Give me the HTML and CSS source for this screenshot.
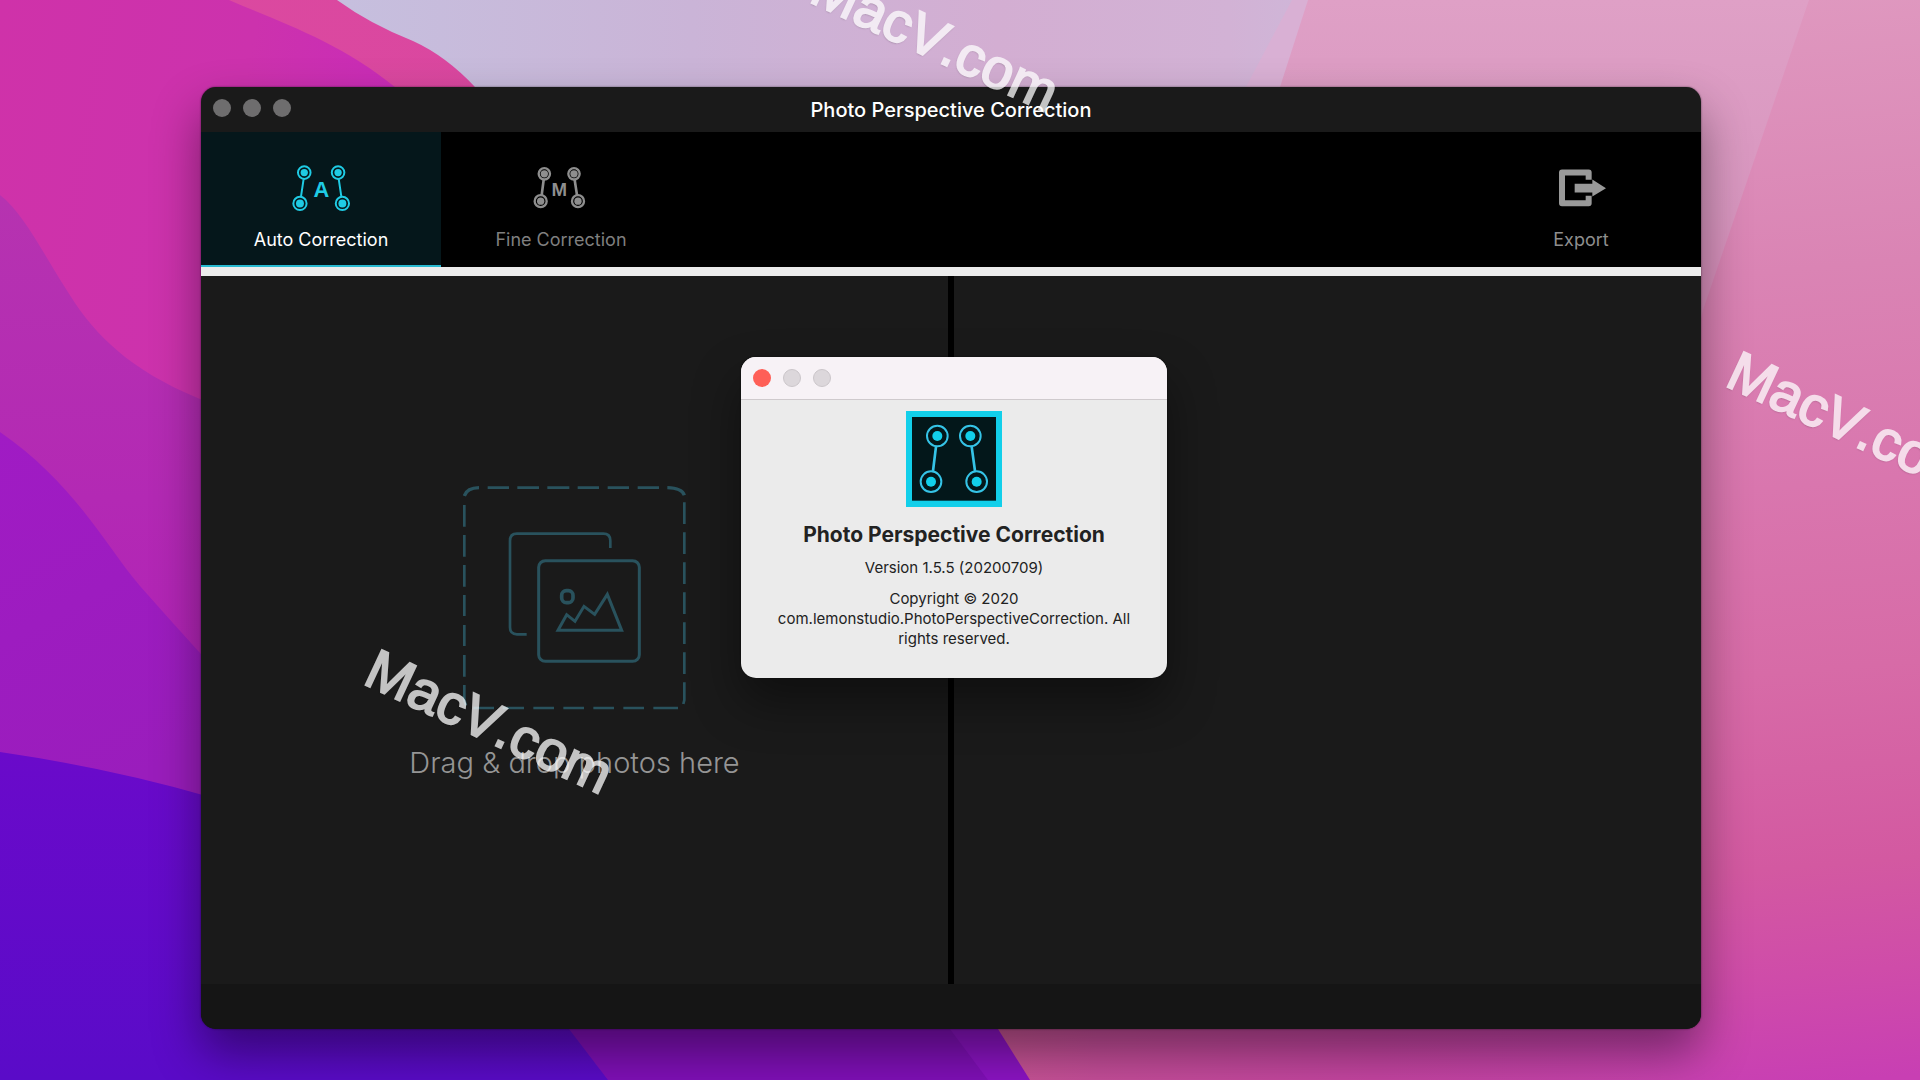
FILE: index.html
```html
<!DOCTYPE html>
<html lang="en">
<head>
<meta charset="utf-8">
<title>Photo Perspective Correction</title>
<link rel="stylesheet" href="styles.css">
</head>
<body>
<div class="desktop">
  <svg class="wallpaper" viewBox="0 0 1920 1080" preserveAspectRatio="none" aria-hidden="true">
    <defs>
      <linearGradient id="sky" x1="0" y1="0" x2="1" y2="0">
        <stop offset="0.18" stop-color="#c6bfde"/><stop offset="0.36" stop-color="#cab4d7"/><stop offset="0.52" stop-color="#d3aed2"/><stop offset="0.64" stop-color="#d2b2d5"/><stop offset="0.68" stop-color="#cfb6d8"/>
      </linearGradient>
      <linearGradient id="rose" x1="0" y1="0" x2="0" y2="1">
        <stop offset="0" stop-color="#dfa0c6"/><stop offset="0.35" stop-color="#d896bf"/><stop offset="1" stop-color="#d873ac"/>
      </linearGradient>
      <linearGradient id="edge" gradientUnits="userSpaceOnUse" x1="1760" y1="0" x2="1850" y2="1080">
        <stop offset="0" stop-color="#df98bf"/><stop offset="0.25" stop-color="#da84b4"/><stop offset="0.45" stop-color="#d976ae"/><stop offset="0.62" stop-color="#d76ba7"/><stop offset="0.8" stop-color="#d359a1"/><stop offset="0.9" stop-color="#cf4ca9"/><stop offset="1" stop-color="#c83fb3"/>
      </linearGradient>
      <linearGradient id="floor" x1="0" y1="0" x2="1" y2="0">
        <stop offset="0" stop-color="#cb5c90"/><stop offset="0.25" stop-color="#c64e9a"/><stop offset="0.6" stop-color="#c645a2"/><stop offset="1" stop-color="#c842b0"/>
      </linearGradient>
      <linearGradient id="coral" x1="0" y1="0" x2="1" y2="0">
        <stop offset="0" stop-color="#dc4aa0"/><stop offset="1" stop-color="#d8449f"/>
      </linearGradient>
      <linearGradient id="magenta" x1="0" y1="0" x2="1" y2="0.3">
        <stop offset="0" stop-color="#cf32a9"/><stop offset="0.6" stop-color="#cc32ad"/><stop offset="1" stop-color="#c92bb8"/>
      </linearGradient>
      <linearGradient id="orchid" x1="0" y1="0" x2="0" y2="1">
        <stop offset="0" stop-color="#b633b0"/><stop offset="1" stop-color="#b01fb8"/>
      </linearGradient>
      <linearGradient id="purple" x1="0" y1="0" x2="0.3" y2="1">
        <stop offset="0" stop-color="#a01bc4"/><stop offset="1" stop-color="#9a1dbc"/>
      </linearGradient>
      <linearGradient id="indigo" x1="0" y1="0" x2="0" y2="1">
        <stop offset="0" stop-color="#6a0aca"/><stop offset="1" stop-color="#5a0bc8"/>
      </linearGradient>
    </defs>
    <rect width="1920" height="1080" fill="url(#sky)"/>
    <path d="M1292 0H1400V87H1246Z" fill="#d9b0d4"/>
    <path d="M1308 0H1920V600H1140L1280 87Z" fill="url(#rose)"/>
    <path d="M1809 0H1920V1080H1690V366L1703 310Z" fill="url(#edge)"/>
    <rect x="900" y="1000" width="790" height="80" fill="url(#floor)"/>
    <path d="M0 0H337Q370 24 413 41Q446 56 475 87L600 300L900 900L998 1029L1030 1080H0Z" fill="url(#coral)"/>
    <path d="M0 0H229C280 22 340 42 395 87V700H0Z" fill="url(#magenta)"/>
    <path d="M0 195C25 214 45 258 75 303C102 343 140 376 210 403V800H0Z" fill="url(#orchid)"/>
    <path d="M0 432C75 484 105 545 140 586Q170 620 210 664V820H0Z" fill="url(#purple)"/>
    <path d="M500 900H930L998 1029L1030 1080H500Z" fill="#8c14c4"/>
    <path d="M500 900H880L950 1029L988 1080H500Z" fill="#8010b8"/>
    <path d="M0 752Q110 768 210 797L480 930Q540 980 569 1029L608 1080H0Z" fill="url(#indigo)"/>
  </svg>

  <main class="window">
    <header class="titlebar">
      <div class="lights"><span class="light"></span><span class="light"></span><span class="light"></span></div>
      <h1 class="title">Photo Perspective Correction</h1>
    </header>
    <nav class="toolbar">
      <button class="tool tool-active" type="button">
        <svg class="tool-icon" width="59" height="47" viewBox="305 272 178 140" aria-hidden="true">
          <g fill="none" stroke="currentColor" stroke-width="6"><circle cx="342" cy="294" r="19"/><circle cx="444" cy="294" r="19"/><circle cx="329" cy="387" r="20"/><circle cx="457" cy="387" r="20"/></g>
          <g stroke="currentColor" stroke-width="6"><path d="M340 314L332 367M446 314L454 367"/></g>
          <g fill="currentColor"><circle cx="342" cy="294" r="11"/><circle cx="444" cy="294" r="11"/><circle cx="329" cy="387" r="12"/><circle cx="457" cy="387" r="12"/><text class="letter" x="394" y="369" font-size="66">A</text></g>
        </svg>
        <span>Auto Correction</span>
      </button>
      <button class="tool" type="button">
        <svg class="tool-icon" width="56" height="47" viewBox="1030 272 168 140" aria-hidden="true">
          <g fill="none" stroke="currentColor" stroke-width="7"><circle cx="1064" cy="298" r="17"/><circle cx="1153" cy="298" r="17"/><circle cx="1053" cy="380" r="18"/><circle cx="1165" cy="380" r="18"/></g>
          <g stroke="currentColor" stroke-width="8"><path d="M1062 316L1056 362M1155 316L1162 362"/></g>
          <g fill="currentColor"><circle cx="1064" cy="298" r="11"/><circle cx="1153" cy="298" r="11"/><circle cx="1053" cy="380" r="11"/><circle cx="1165" cy="380" r="11"/><text class="letter" x="1109" y="363" font-size="56">M</text></g>
        </svg>
        <span>Fine Correction</span>
      </button>
      <button class="tool tool-export" type="button">
        <svg class="tool-icon" width="49" height="47" viewBox="172 105 147 140" aria-hidden="true">
          <path d="M267 149V127H187V219H267V197" fill="none" stroke="currentColor" stroke-width="18" stroke-linejoin="round"/>
          <path d="M225 161H278V148L319 174L278 199V187H225Z" fill="currentColor"/>
        </svg>
        <span>Export</span>
      </button>
    </nav>
    <section class="workspace">
      <div class="pane">
        <svg class="drop-art" width="223" height="224" viewBox="339 48 669 672" aria-hidden="true">
          <g fill="none" stroke="#29525d" stroke-width="8">
            <path d="M413 53H477M502 53H567M592 53H658M683 53H747M773 53H837M863 53H927"/>
            <path d="M343 105V170M343 195V260M343 285V350M343 375V438M343 465V528M343 555V620M343 645V690L348 706"/>
            <path d="M1003 97V162M1003 187V252M1003 277V342M1003 367V432M1003 457V522M1003 547V612M1003 637V690L1000 702"/>
            <path d="M370 714H432M458 714H522M550 714H612M640 714H702M730 714H792M820 714H882M910 714H984"/>
            <path d="M343 78Q350 54 387 53M952 53Q996 54 1003 76" stroke-width="10"/>
            <path d="M781 234V212Q781 191 760 191H501Q480 191 480 212V472Q480 493 501 493H530"/>
            <rect x="566" y="272" width="302" height="302" rx="20" stroke-width="9"/>
            <rect x="635" y="362" width="34" height="36" rx="14" stroke-width="11"/>
            <path d="M624 481L650 434L675 454L702 409L734 433L772 373L815 481Z" stroke-width="9"/>
          </g>
        </svg>
        <p class="drop-text">Drag &amp; drop photos here</p>
      </div>
      <div class="pane"></div>
    </section>
    <footer class="statusbar"></footer>
  </main>

  <section class="about" role="dialog" aria-labelledby="about-name">
    <header class="about-bar">
      <div class="lights">
        <button class="light light-close" type="button" aria-label="Close"></button><span class="light light-off"></span><span class="light light-off"></span>
      </div>
    </header>
    <div class="about-body">
      <svg width="96" height="96" viewBox="528 198 288 288" aria-hidden="true">
        <rect x="528" y="198" width="288" height="288" fill="#12cfea"/>
        <rect x="546" y="216" width="252" height="251" fill="#03171a"/>
        <g fill="none" stroke="#35c3e6" stroke-width="6"><circle cx="622" cy="273" r="31"/><circle cx="721" cy="273" r="31"/><circle cx="603" cy="410" r="31"/><circle cx="740" cy="410" r="31"/></g>
        <path d="M618 305L609 378M725 305L735 378" stroke="#35c3e6" stroke-width="8"/>
        <g fill="#12cfea"><circle cx="622" cy="273" r="15"/><circle cx="721" cy="273" r="15"/><circle cx="603" cy="410" r="15"/><circle cx="740" cy="410" r="15"/></g>
      </svg>
      <h2 class="about-name" id="about-name">Photo Perspective Correction</h2>
      <p class="about-text">Version 1.5.5 (20200709)</p>
      <p class="about-text">Copyright © 2020 com.lemonstudio.PhotoPerspectiveCorrection. All rights reserved.</p>
    </div>
  </section>

  <span class="mark mark-top">MacV.com</span>
  <span class="mark mark-left">MacV.com</span>
  <span class="mark mark-right">MacV.com</span>
</div>
</body>
</html>
```
FILE: styles.css
```css
* { box-sizing: border-box; }
body, h1, h2, p { margin: 0; }
body { font-family: Inter, "Liberation Sans", sans-serif; }
button { border: 0; padding: 0; font: inherit; }

.desktop {
  position: relative;
  display: flex;
  min-height: 100vh;
  padding: 87px 219px 51px 201px;
  overflow: hidden;
}
.wallpaper { position: absolute; inset: 0; width: 100%; height: 100%; }

.window {
  position: relative;
  display: flex;
  flex: 1;
  flex-direction: column;
  overflow: hidden;
  border-radius: 15px;
  background: #1a1a1a;
}
.window, .about { box-shadow: 0 0 2px rgba(0, 0, 0, 0.6), 0 24px 48px rgba(0, 0, 0, 0.42); }

.titlebar {
  display: grid;
  grid-template-columns: 1fr auto 1fr;
  height: 45px;
  padding: 0 12px;
}
.lights { display: flex; gap: 12px; padding-top: 12px; }
.light { width: 18px; height: 18px; border-radius: 50%; background: #6e6d6e; }
.title { color: #fff; font-size: 20px; font-weight: 500; line-height: 46px; }

.toolbar {
  display: flex;
  height: 144px;
  border-bottom: 9px solid #ececec;
  background: #000;
}
.tool {
  display: flex;
  flex-direction: column;
  align-items: center;
  gap: 16px;
  width: 240px;
  padding-top: 33px;
  background: transparent;
  color: #8e8e8e;
  font-size: 18px;
  line-height: 24px;
}
.tool span { color: #7f7f7f; }
.tool-active { border-bottom: 2px solid #27b9d0; background: #05171b; color: #1fcbe4; }
.tool-active span { color: #fff; }
.tool-export { margin-left: auto; color: #999; }
.tool-export span { color: #8e8e8e; }
.letter { font-family: "Liberation Sans", sans-serif; font-weight: 700; text-anchor: middle; }

.workspace {
  display: grid;
  flex: 1;
  grid-template-columns: 1fr 1fr;
  gap: 6px;
  background: #000;
}
.pane {
  display: flex;
  flex-direction: column;
  align-items: center;
  gap: 33px;
  padding-top: 210px;
  background: #1a1a1a;
}
.drop-text { color: #959595; font-size: 29px; font-weight: 300; line-height: 40px; }
.statusbar { height: 45px; background: #151515; }

.about {
  position: absolute;
  top: 357px;
  left: calc(50% - 219px);
  width: 426px;
  overflow: hidden;
  border-radius: 15px;
  background: #ebebeb;
  color: #222;
}
.about-bar { height: 43px; padding: 0 12px; border-bottom: 1px solid #cfcacd; background: #f7f2f6; }
.light-close { background: #fe5f57; }
.light-off { border: 1px solid #cbc6ca; background: #dcd7db; }
.about-body {
  display: flex;
  flex-direction: column;
  align-items: center;
  gap: 11px;
  padding: 11px 30px 29px;
  text-align: center;
}
.about-name { padding-top: 5px; font-size: 21px; font-weight: 700; line-height: 24px; }
.about-text { font-size: 15px; line-height: 20px; }

.mark {
  position: absolute;
  margin-top: -52px;
  color: #fff;
  font-family: "Liberation Sans", sans-serif;
  font-size: 56px;
  font-kerning: none;
  line-height: 64px;
  opacity: 0.74;
  text-shadow: 0 1px 2px rgba(0, 0, 0, 0.4);
  transform: rotate(25deg);
  transform-origin: 0 52px;
  -webkit-text-stroke: 2px #fff;
}
.mark-top { top: 2px; left: 807px; }
.mark-left { top: 684px; left: 361px; }
.mark-right { top: 386px; left: 1723px; }
```
